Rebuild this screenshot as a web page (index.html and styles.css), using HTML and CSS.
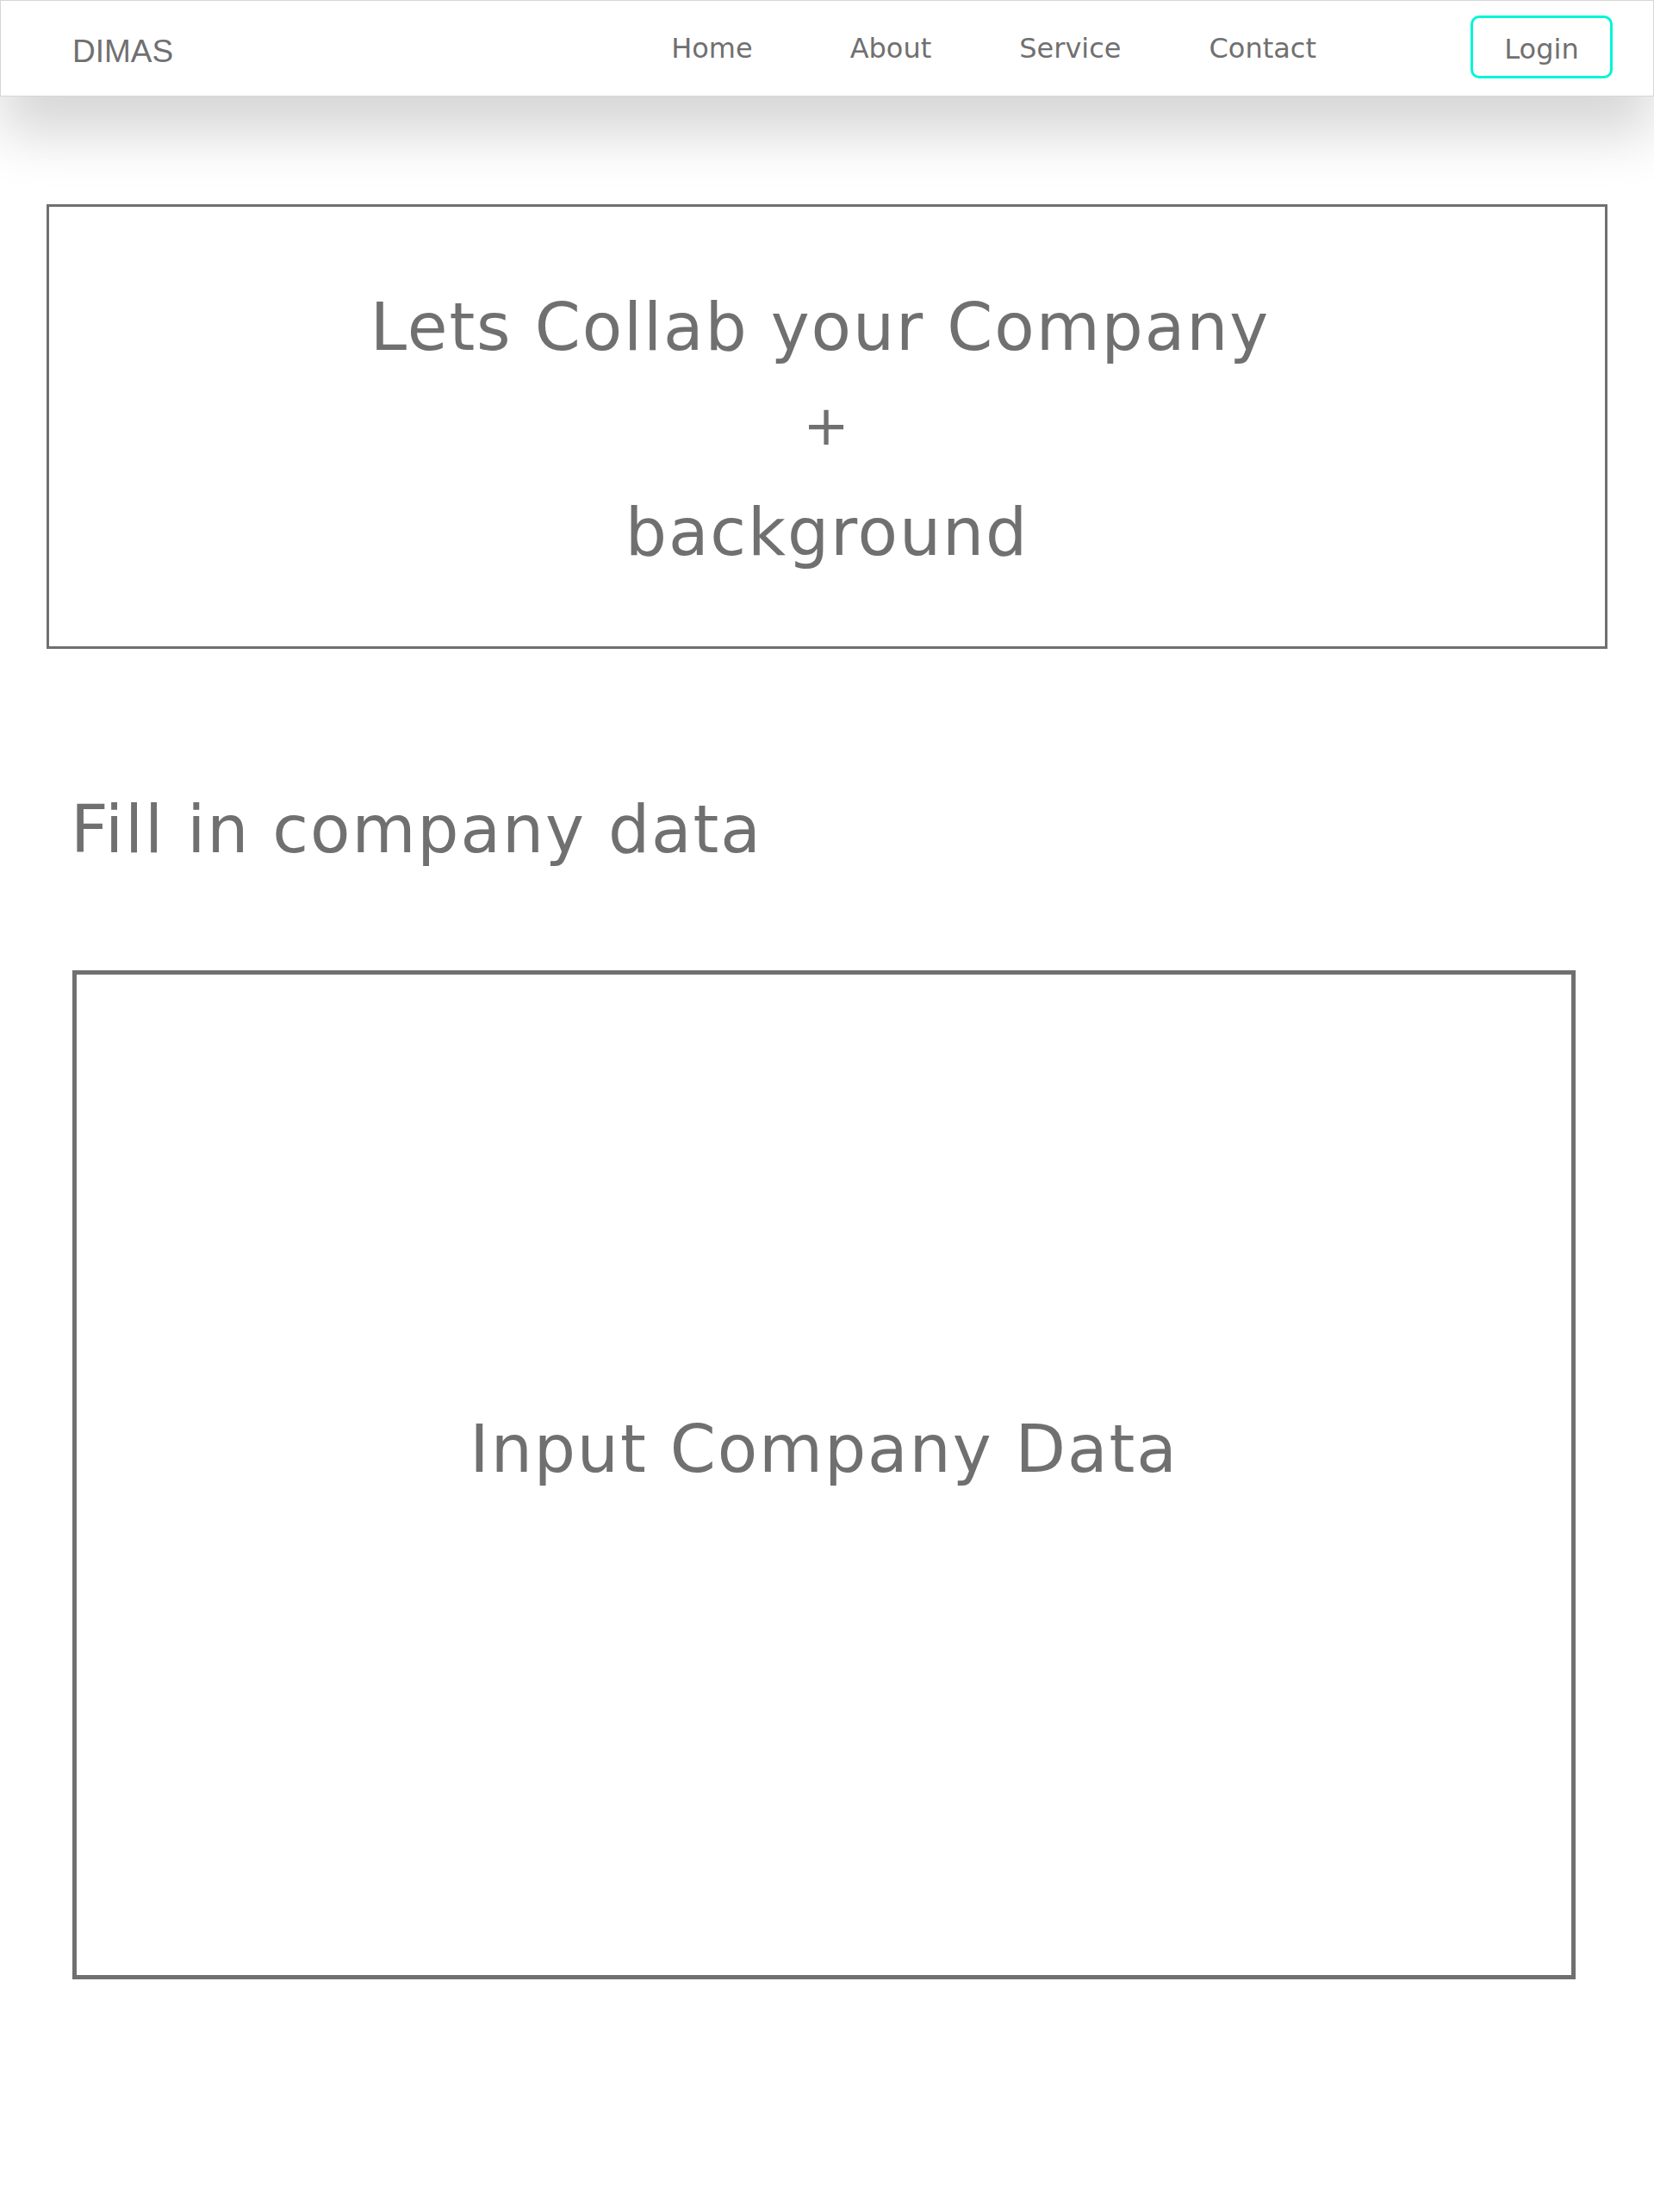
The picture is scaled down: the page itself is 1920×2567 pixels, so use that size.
FILE: index.html
```html
<!DOCTYPE html>
<html lang="en">
<head>
<meta charset="utf-8">
<title>DIMAS</title>
<link rel="stylesheet" href="styles.css">
</head>
<body>
<header class="navbar">
  <div class="brand">DIMAS</div>
  <nav class="nav-links">
    <a href="#" class="nav-link">Home</a>
    <a href="#" class="nav-link nav-about">About</a>
    <a href="#" class="nav-link">Service</a>
    <a href="#" class="nav-link">Contact</a>
  </nav>
  <a href="#" class="login-btn">Login</a>
</header>
<main class="content">
  <section class="hero">
    <p class="hero-line hero-title">Lets Collab your Company</p>
    <p class="hero-line hero-plus">+</p>
    <p class="hero-line">background</p>
  </section>
  <h2 class="section-title">Fill in company data</h2>
  <section class="data-box">
    <p class="data-label">Input Company Data</p>
  </section>
</main>
</body>
</html>
```
FILE: styles.css
```css
* { box-sizing: border-box; }
body {
  margin: 0;
  background: #ffffff;
  color: #707070;
  font-family: "DejaVu Sans", sans-serif;
  min-height: 2567px;
}
.navbar {
  position: relative;
  z-index: 2;
  height: 112px;
  display: flex;
  align-items: center;
  padding: 0 47px 0 83px;
  background: #ffffff;
  border: 1px solid #d6d6d6;
  box-shadow: 0 44px 64px rgba(0, 0, 0, 0.16);
}
.brand {
  font-family: "Liberation Sans", Arial, sans-serif;
  font-size: 37px;
  color: #707070;
  padding-top: 7px;
}
.nav-links {
  display: flex;
  gap: 102px;
  margin-left: auto;
  margin-right: 179px;
}
.nav-link {
  font-size: 32px;
  color: #707070;
  text-decoration: none;
}
.nav-about {
  margin-left: 11px;
}
.login-btn {
  display: flex;
  align-items: center;
  justify-content: center;
  width: 165px;
  height: 73px;
  margin-top: -3px;
  border: 3px solid #00f5d6;
  border-radius: 10px;
  font-size: 32px;
  color: #707070;
  text-decoration: none;
  padding-top: 4px;
}
.content {
  display: flex;
  flex-direction: column;
  padding-top: 125px;
}
.hero {
  margin: 0 54px;
  height: 516px;
  border: 3px solid #707070;
  padding-top: 80px;
  text-align: center;
}
.hero-line, .section-title, .data-label {
  margin: 0;
  font-family: "DejaVu Sans", sans-serif;
  font-weight: normal;
  font-size: 76px;
  line-height: 119px;
  letter-spacing: 1.9px;
  color: #707070;
}
.hero-title {
  padding-right: 16px;
}
.hero-plus {
  font-size: 64px;
  line-height: 111px;
  margin-bottom: 8px;
}
.section-title {
  margin: 150px 0 0 82px;
}
.data-box {
  margin: 104px 0 0 84px;
  width: 1745px;
  height: 1171px;
  border: 5px solid #707070;
  padding-top: 491px;
  text-align: center;
}
```
